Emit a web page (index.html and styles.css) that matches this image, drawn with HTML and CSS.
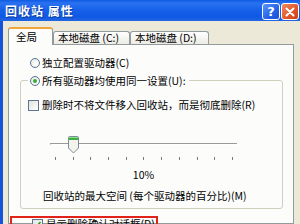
FILE: index.html
```html
<!DOCTYPE html>
<html lang="zh-CN">
<head>
<meta charset="utf-8">
<title>回收站 属性</title>
<link rel="stylesheet" href="styles.css">
</head>
<body>
<div class="window">
  <div class="titlebar">
    <span class="title">回收站 属性</span>
    <div class="tb-buttons">
      <span class="tb-btn help">?</span>
      <span class="tb-btn close"><svg width="10" height="10" viewBox="0 0 10 10"><path d="M1.5 1.5 L8.5 8.5 M8.5 1.5 L1.5 8.5" stroke="#fff" stroke-width="2" stroke-linecap="round"/></svg></span>
    </div>
  </div>
  <div class="body">
    <div class="tabs">
      <div class="tab active">全局</div>
      <div class="tab t1">本地磁盘 (C:)</div>
      <div class="tab t2">本地磁盘 (D:)</div>
    </div>
    <div class="panel">
      <div class="row opt1"><span class="radio"></span>独立配置驱动器(C)</div>
      <fieldset class="group">
        <legend class="legend"><span class="radio checked"></span>所有驱动器均使用同一设置(U):</legend>
        <div class="row opt-check"><span class="check"></span>删除时不将文件移入回收站，而是彻底删除(R)</div>
        <div class="slider">
          <div class="track"></div>
          <svg class="thumb" width="11" height="18" viewBox="0 0 11 18">
            <path d="M0.5 1.5 Q0.5 0.5 1.5 0.5 H9.5 Q10.5 0.5 10.5 1.5 V12 L5.5 17 L0.5 12 Z" fill="#f4f3ee" stroke="#7d8a97"/>
            <rect x="1" y="1" width="9" height="3" fill="#3cb43c"/>
            <rect x="1" y="1" width="9" height="1" fill="#8be08b"/>
          </svg>
        </div>
        <div class="ticks">
          <i></i><i></i><i></i><i></i><i></i><i></i><i></i><i></i><i></i><i></i><i></i>
        </div>
        <div class="value">10%</div>
        <div class="caption">回收站的最大空间 (每个驱动器的百分比)(M)</div>
      </fieldset>
      <div class="highlight">
        <div class="row"><span class="check checked"><svg width="9" height="9" viewBox="0 0 9 9"><path d="M1.5 4.5 L3.5 6.5 L7.5 2" stroke="#21a121" stroke-width="1.6" fill="none"/></svg></span>显示删除确认对话框(D)</div>
      </div>
    </div>
  </div>
</div>
</body>
</html>
```

FILE: styles.css
```css
* { box-sizing: border-box; }
html, body { margin: 0; }
body {
  width: 300px;
  height: 224px;
  overflow: hidden;
  background: #ECE9D8;
  font-family: "Noto Sans CJK SC", "Noto Sans", sans-serif;
  font-size: 10.5px;
  color: #000;
}
.window {
  display: flex;
  flex-direction: column;
  height: 224px;
}
.titlebar {
  flex: none;
  height: 21px;
  display: flex;
  align-items: center;
  justify-content: space-between;
  padding: 0 1px 0 5px;
  background: linear-gradient(#0f5be4 0%, #2a72f0 15%, #1862ea 45%, #0e58e4 80%, #2466e0 100%);
}
.title {
  color: #fff;
  font-weight: bold;
  font-size: 12px;
  letter-spacing: 1px;
  text-shadow: 1px 1px 0 #0a3a9e;
}
.tb-buttons {
  display: flex;
  gap: 1px;
  align-self: flex-end;
  padding-bottom: 1px;
}
.tb-btn {
  width: 18px;
  height: 17px;
  border: 1px solid #fff;
  border-radius: 3px;
  display: flex;
  align-items: center;
  justify-content: center;
  color: #fff;
  font-family: "DejaVu Sans", sans-serif;
  font-weight: bold;
  font-size: 13px;
  line-height: 1;
}
.help { background: linear-gradient(135deg, #5c95f8, #2462e8 60%, #1a50d0); }
.close { background: linear-gradient(135deg, #f08a60, #e05528 60%, #c8421c); }
.body {
  flex: 1;
  min-height: 0;
  display: flex;
  flex-direction: column;
  border-left: 3px solid #1553da;
  padding: 6px 6px 0 5px;
}
.tabs {
  flex: none;
  height: 17px;
  display: flex;
  align-items: flex-end;
}
.tab {
  height: 13px;
  border: 1px solid #919B9C;
  border-bottom: 0;
  border-radius: 3px 3px 0 0;
  background: linear-gradient(#ffffff, #ecebe4);
  display: flex;
  align-items: center;
  padding-left: 4px;
  white-space: nowrap;
  line-height: 12px;
}
.tab.active {
  width: 45px;
  height: 18px;
  margin-bottom: -1px;
  padding-left: 7px;
  background: #fcfcfb;
  border-top: 2px solid #f2a53a;
  position: relative;
  z-index: 1;
}
.t1 { width: 77px; }
.t2 { width: 79px; }
.panel {
  flex: 1;
  min-height: 0;
  border: 1px solid #919B9C;
  background: #fcfcfb;
  padding-top: 12px;
}
.row {
  display: flex;
  align-items: center;
  gap: 2px;
  height: 12px;
  line-height: 12px;
  white-space: nowrap;
}
.opt1 { margin-left: 21px; }
.radio {
  flex: none;
  width: 10px;
  height: 10px;
  border: 1px solid #5a7595;
  border-radius: 50%;
  background: radial-gradient(circle at 60% 60%, #ffffff, #e2e2dc);
  display: flex;
  align-items: center;
  justify-content: center;
}
.radio.checked::after {
  content: "";
  width: 4px;
  height: 4px;
  border-radius: 50%;
  background: #36a936;
}
.check {
  flex: none;
  width: 11px;
  height: 11px;
  margin-right: 1px;
  border: 1px solid #5a7595;
  background: linear-gradient(135deg, #e4e3dc, #ffffff);
  display: flex;
  align-items: center;
  justify-content: center;
}
.group {
  margin: 4px 10px 0 11px;
  padding: 0 0 6px 7px;
  border: 1px solid #D0D0BF;
  border-radius: 3px;
  min-width: 0;
}
.legend {
  display: flex;
  align-items: center;
  gap: 2px;
  height: 14px;
  padding: 2px 3px 0 2px;
  line-height: 12px;
  white-space: nowrap;
}
.opt-check { margin-top: 12px; }
.slider {
  position: relative;
  margin: 25px 0 0 22px;
  width: 187px;
  height: 18px;
  padding-top: 7px;
}
.track {
  height: 2px;
  border-top: 1px solid #9a9a96;
  border-bottom: 1px solid #ffffff;
  border-left: 1px solid #9a9a96;
}
.thumb {
  position: absolute;
  left: 18px;
  top: 0;
}
.ticks {
  margin: 3px 0 0 22px;
  width: 187px;
  height: 3px;
  padding: 0 4px 0 5px;
  display: flex;
  justify-content: space-between;
}
.ticks i {
  width: 1px;
  height: 3px;
  background: #7a7a78;
}
.value {
  margin: 9px 0 0 22px;
  width: 187px;
  height: 12px;
  line-height: 12px;
  text-align: center;
}
.caption {
  margin: 9px 0 0 15px;
  height: 12px;
  line-height: 12px;
  white-space: nowrap;
}
.highlight {
  margin: 7px 0 0 1px;
  width: 148px;
  height: 30px;
  border: 2px solid #e2231a;
  padding: 0 0 0 20px;
}
.highlight .row { height: 12px; margin-top: 0; }
```
